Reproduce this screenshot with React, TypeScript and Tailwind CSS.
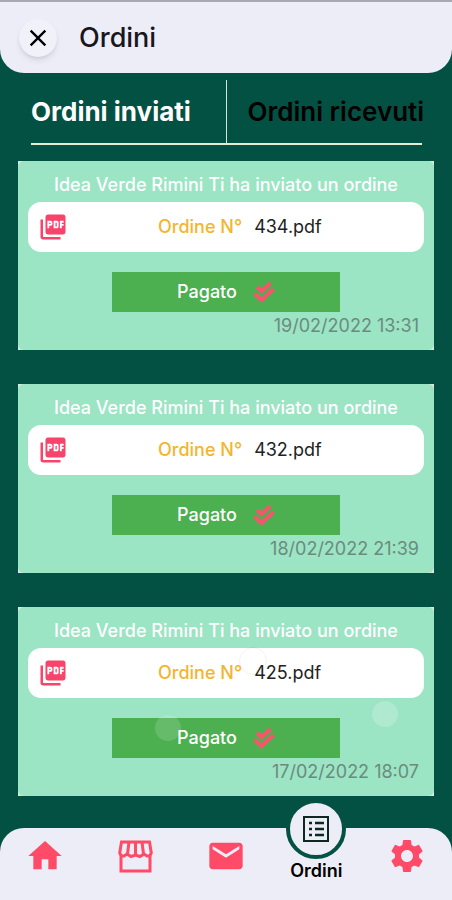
import { MdClose, MdHome, MdMail, MdPictureAsPdf, MdSettings } from 'react-icons/md'

function StoreIcon() {
  return (
    <svg viewBox="0 0 35 33" className="w-[35px] h-[33px]" fill="none" stroke="currentColor">
      <path strokeWidth="3" d="M3.500 2H31.500L33.300 13L31.500 16H29L26 14L22 16.500L17.500 15L13 16.500L9 14L6 16H3.500L1.700 13Z" />
      <path strokeWidth="3" d="M11 2L9.500 14M17.500 2V15M24 2L25.500 14" />
      <path strokeWidth="3" d="M3 15V31H32V15" />
    </svg>
  )
}

function ListIcon() {
  return (
    <svg viewBox="0 0 26 26" className="w-[26px] h-[26px]" fill="none" stroke="currentColor" strokeWidth="2">
      <rect x="1" y="1" width="24" height="24" />
      <path d="M6 7H9M12 7H21M6 13H9M12 13H21M6 19H9M12 19H21" strokeWidth="2.400" />
    </svg>
  )
}

function DoubleCheckIcon() {
  return (
    <svg viewBox="0 0 22 22" className="w-[22px] h-[22px]" fill="none" stroke="currentColor" strokeWidth="4">
      <path d="M4 6L8.500 10L17.500 2" />
      <path d="M1.500 12.500L8.500 19L20.500 8" />
    </svg>
  )
}

export default function App() {
  const orders = [
    { file: '434.pdf', date: '19/02/2022 13:31' },
    { file: '432.pdf', date: '18/02/2022 21:39' },
    { file: '425.pdf', date: '17/02/2022 18:07', taps: true },
  ]

  return (
    <div className="min-h-screen flex flex-col bg-[#035143] font-['Inter',sans-serif]">
      {/* Header */}
      <header className="flex items-center h-[73px] px-[19px] gap-[22px] bg-[#ecedf6] border-t-2 border-[#a9a9b3] rounded-b-[24px]">
        <button
          type="button"
          aria-label="Chiudi"
          className="flex items-center justify-center w-[38px] h-[38px] rounded-full bg-[#f1f1f9] text-black shadow-md"
        >
          <MdClose className="w-7 h-7" />
        </button>
        <h1 className="text-[27px] leading-8 font-medium text-[#17171c]">Ordini</h1>
      </header>

      {/* Tabs */}
      <div className="mt-[7px] ml-[31px] mr-[30px] grid grid-cols-2 border-b-2 border-[#e3eed0] text-[26px] whitespace-nowrap">
        <button type="button" className="h-[63px] border-r border-[#d5e6dc] text-left font-bold text-white">
          Ordini inviati
        </button>
        <button type="button" className="h-[63px] pl-[21px] text-left font-semibold text-black">
          Ordini ricevuti
        </button>
      </div>

      {/* Orders */}
      <main className="flex-1 flex flex-col gap-[34px] pt-4 pb-8 px-[18px]">
        {orders.map((order) => (
          <div key={order.file} className="relative bg-[#dfe5e2]">
            <div className="flex flex-col rounded-md bg-[#9be4c4] px-2.5 pt-3 pb-3">
              <p className="text-center text-lg leading-6 font-medium text-white">
                Idea Verde Rimini Ti ha inviato un ordine
              </p>
              <a
                href="#"
                className="mt-[5px] grid grid-cols-[130px_1fr] items-center h-[50px] rounded-[13px] bg-white text-lg leading-6"
              >
                <MdPictureAsPdf className="ml-2.5 w-[30px] h-[30px] text-[#f8436b]" />
                <span className="flex gap-3">
                  <span className="font-medium text-[#f3b52f]">Ordine N°</span>
                  <span className="text-[#222222]">{order.file}</span>
                </span>
              </a>
              <button
                type="button"
                className="mt-5 self-center w-[228px] h-10 flex items-center justify-center gap-4 bg-[#4caf50] text-lg leading-6 font-medium text-white"
              >
                Pagato
                <span className="text-[#f8556d]">
                  <DoubleCheckIcon />
                </span>
              </button>
              <time className="mt-0.5 pr-[5px] text-right text-lg leading-6 text-[#6b8b7e]">{order.date}</time>
            </div>
            {order.taps && (
              <>
                <span className="absolute left-[137px] top-[108px] w-[26px] h-[26px] rounded-full bg-white/15" />
                <span className="absolute left-[354px] top-[94px] w-[26px] h-[26px] rounded-full bg-white/20" />
                <span className="absolute left-[221px] top-[40px] w-[28px] h-[28px] rounded-full border border-black/5" />
              </>
            )}
          </div>
        ))}
      </main>

      {/* Bottom navigation */}
      <nav className="grid grid-cols-5 justify-items-center h-[72px] rounded-t-[24px] bg-[#ecedf6] text-[#ff4b68]">
        <a href="#" aria-label="Home" className="pt-2">
          <MdHome className="w-10 h-10" />
        </a>
        <a href="#" aria-label="Negozio" className="pt-3">
          <StoreIcon />
        </a>
        <a href="#" aria-label="Messaggi" className="pt-2">
          <MdMail className="w-10 h-10" />
        </a>
        <a href="#" className="-mt-[29px] flex flex-col items-center text-black">
          <span className="flex items-center justify-center w-[60px] h-[60px] rounded-full border-4 border-[#035143] bg-[#ecedf6] text-[#0d2723]">
            <ListIcon />
          </span>
          <span className="text-lg leading-6 font-semibold">Ordini</span>
        </a>
        <a href="#" aria-label="Impostazioni" className="pt-2">
          <MdSettings className="w-10 h-10" />
        </a>
      </nav>
    </div>
  )
}
